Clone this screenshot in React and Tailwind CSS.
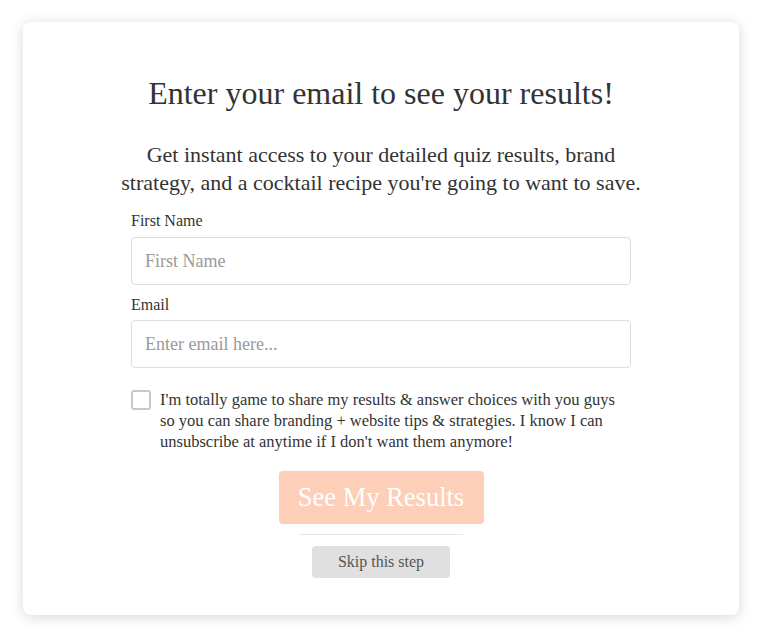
import { useState } from 'react';

export default function App() {
  const [agree, setAgree] = useState(false);

  return (
    <div className="min-h-screen bg-white px-[23px] pt-[22px] pb-[23px] font-['Liberation_Serif',serif] text-[#333]">
      <div className="bg-white rounded-lg shadow-[0_2px_14px_rgba(0,0,0,0.16)] w-[716px] h-[593px] flex flex-col items-center pt-[51px]">
        {/* Heading */}
        <h1 className="text-[32px] leading-[40px] text-[#333] text-center">
          Enter your email to see your results!
        </h1>
        <p className="mt-[28px] text-[22px] leading-[28px] text-[#333] text-center w-[540px]">
          Get instant access to your detailed quiz results, brand strategy, and a cocktail recipe you're going to want to save.
        </p>

        {/* Form */}
        <div className="w-[500px] mt-[14px] flex flex-col">
          <label className="text-[16px] leading-[20px] text-[#333]">First Name</label>
          <input
            type="text"
            placeholder="First Name"
            className="mt-[6px] h-[48px] w-full border border-[#dcdcdc] rounded px-[13px] text-[18px] text-[#333] placeholder:text-[#9a9a9a] outline-none font-['Liberation_Serif',serif]"
          />
          <label className="mt-[10px] text-[16px] leading-[20px] text-[#333]">Email</label>
          <input
            type="email"
            placeholder="Enter email here..."
            className="mt-[5px] h-[48px] w-full border border-[#dcdcdc] rounded px-[13px] text-[18px] text-[#333] placeholder:text-[#9a9a9a] outline-none font-['Liberation_Serif',serif]"
          />

          <div className="mt-[21px] flex items-start gap-[9px]">
            <button
              onClick={() => setAgree(!agree)}
              className="mt-[1px] w-[20px] h-[20px] shrink-0 border-2 border-[#c8c8c8] rounded-[3px] bg-white"
            >
              {agree && <span className="block w-[8px] h-[8px] m-auto bg-[#999]" />}
            </button>
            <p className="text-[16.5px] leading-[21px] text-[#333] w-[470px]">
              I'm totally game to share my results &amp; answer choices with you guys so you can share branding + website tips &amp; strategies. I know I can unsubscribe at anytime if I don't want them anymore!
            </p>
          </div>
        </div>

        {/* Actions */}
        <button className="mt-[19px] w-[205px] h-[53px] rounded bg-[#fdceb8] text-white text-[26.5px] font-['Liberation_Serif',serif]">
          See My Results
        </button>
        <div className="mt-[10px] w-[164px] h-px bg-[#e6e6e6]" />
        <button className="mt-[11px] w-[138px] h-[32px] rounded bg-[#e0e0e0] text-[#555] text-[16px] font-['Liberation_Serif',serif]">
          Skip this step
        </button>
      </div>
    </div>
  );
}
